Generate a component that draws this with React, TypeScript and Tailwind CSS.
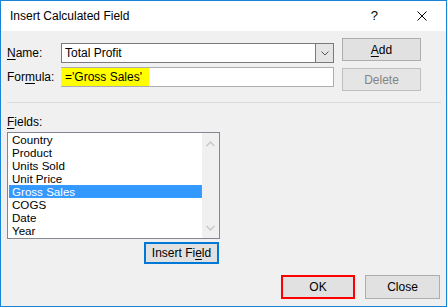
import React from 'react'

const fields = ['Country', 'Product', 'Units Sold', 'Unit Price', 'Gross Sales', 'COGS', 'Date', 'Year']

function Btn({
  children,
  className = '',
  border = 'border border-[#adadad]',
}: {
  children: React.ReactNode
  className?: string
  border?: string
}) {
  return (
    <div className={`flex items-center justify-center bg-[#e1e1e1] text-[12px] leading-none ${border} ${className}`}>
      {children}
    </div>
  )
}

export default function App() {
  return (
    <div
      className="w-[447px] h-[307px] border border-[#1883d7] flex flex-col bg-[#f0f0f0] text-black"
      style={{ fontFamily: '"Liberation Sans", Arial, sans-serif' }}
    >
      {/* title bar */}
      <div className="h-[30px] bg-white flex items-center pl-[9px] pr-[19px] text-[12px]">
        <span className="flex-1">Insert Calculated Field</span>
        <span className="mr-[39px] text-[13px]">?</span>
        <svg width="10" height="10" viewBox="0 0 10 10" className="mb-[1px]">
          <path d="M0.5 0.5 L9.5 9.5 M9.5 0.5 L0.5 9.5" stroke="#000" strokeWidth="1" />
        </svg>
      </div>

      <div className="flex-1 flex flex-col pl-[6px] text-[12px]">
        {/* name / formula + buttons */}
        <div className="flex items-start mt-[7px]">
          <div className="flex flex-col mt-[5px] gap-[4px]">
            <div className="flex items-center h-[20px]">
              <span className="w-[54px]">
                <span className="underline underline-offset-2">N</span>ame:
              </span>
              <div className="w-[273px] h-[20px] flex bg-white border border-[#7a7a7a]">
                <span className="flex-1 pl-[3px] leading-[18px]">Total Profit</span>
                <div className="w-[18px] h-full bg-[#e5e5e5] border-l border-[#7a7a7a] flex items-center justify-center">
                  <svg width="8" height="5" viewBox="0 0 8 5">
                    <path d="M0.5 0.5 L4 4 L7.5 0.5" fill="none" stroke="#555" strokeWidth="1" />
                  </svg>
                </div>
              </div>
            </div>
            <div className="flex items-center h-[20px]">
              <span className="w-[54px]">
                For<span className="underline underline-offset-2">m</span>ula:
              </span>
              <div className="w-[273px] h-[20px] flex bg-white border border-[#abadb3] border-l-0">
                <span className="w-[88px] h-full bg-[#ffff00] pl-[4px] leading-[18px]">='Gross Sales'</span>
              </div>
            </div>
          </div>
          <div className="flex flex-col ml-[8px] gap-[7px]">
            <Btn className="w-[79px] h-[23px]">
              <span>
                <span className="underline underline-offset-2">A</span>dd
              </span>
            </Btn>
            <Btn className="w-[79px] h-[23px] text-[#838383] bg-[#e5e5e5]" border="border border-[#bfbfbf]">
              Delete
            </Btn>
          </div>
        </div>

        {/* separator */}
        <div className="mt-[11px] w-[434px] h-[1px] bg-[#d9d9d9]" />

        {/* fields */}
        <div className="mt-[11px] h-[16px] leading-[16px]">
          <span className="underline underline-offset-2">F</span>ields:
        </div>
        <div className="mt-[2px] w-[213px] h-[107px] bg-white border border-[#828790] flex text-[11.6px]">
          <div className="flex-1 flex flex-col">
            {fields.map(f =>
              f === 'Gross Sales' ? (
                <div
                  key={f}
                  className="h-[13px] leading-[11px] ml-[1px] pl-[2px] bg-[#3399ff] text-white border border-dotted border-[#c9833a]"
                >
                  {f}
                </div>
              ) : (
                <div key={f} className="h-[13px] leading-[13px] pl-[4px]">
                  {f}
                </div>
              )
            )}
          </div>
          <div className="w-[17px] bg-[#f0f0f0] flex flex-col items-center justify-between pt-[8px] pb-[7px]">
            <svg width="9" height="6" viewBox="0 0 9 6">
              <path d="M0.5 5 L4.5 1 L8.5 5" fill="none" stroke="#c8c8c8" strokeWidth="1.5" />
            </svg>
            <svg width="9" height="6" viewBox="0 0 9 6">
              <path d="M0.5 1 L4.5 5 L8.5 1" fill="none" stroke="#c8c8c8" strokeWidth="1.5" />
            </svg>
          </div>
        </div>
        <Btn className="mt-[3px] ml-[137px] w-[75px] h-[22px]" border="border-2 border-[#0078d7]">
          <span>
            Insert Fi<span className="underline underline-offset-2">e</span>ld
          </span>
        </Btn>

        {/* bottom buttons */}
        <div className="mt-[11px] flex gap-[10px] pl-[274px]">
          <Btn className="w-[74px] h-[24px]" border="border-2 border-[#ff0000]">
            OK
          </Btn>
          <Btn className="w-[75px] h-[24px]">Close</Btn>
        </div>
      </div>
    </div>
  )
}
